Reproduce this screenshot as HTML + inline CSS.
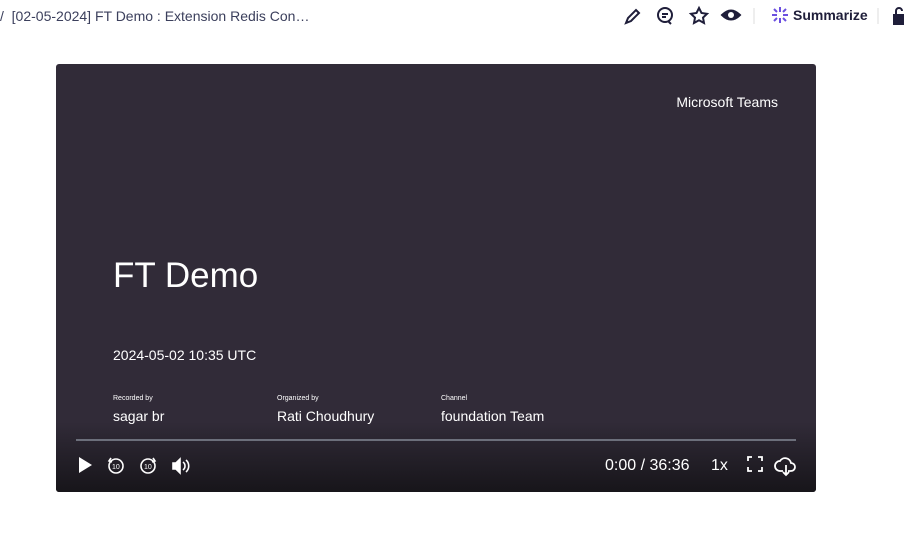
<!DOCTYPE html>
<html><head><meta charset="utf-8"><style>
body{margin:0;width:915px;height:539px;background:#fff;font-family:"Liberation Sans",sans-serif;position:relative;overflow:hidden}
.t{position:absolute;white-space:nowrap}
.v{position:absolute;left:56px;top:64px;width:760px;height:428px;background:#312b38;border-radius:3px;overflow:hidden;color:#fff}
.grad{position:absolute;left:0;right:0;bottom:0;height:70px;background:linear-gradient(#312b3800,#17151a)}
</style></head><body>
<div class="t" style="left:0;top:8px;font-size:14px;color:#3b3f5c">/ &nbsp;[02-05-2024] FT Demo : Extension Redis Con…</div>
<svg style="position:absolute;left:622px;top:5px" width="293" height="22" viewBox="0 0 293 22" fill="none" stroke="#1f1e3a" stroke-width="2">
<path d="M4 18l2-5 8-8 3 3-8 8z"/>
<circle cx="43" cy="10" r="7"/><path d="M40 9h6M40 12h4M46 16l3 3"/>
<path d="M77 3l2.5 5 5.5 .8-4 3.8 1 5.4-5-2.7-5 2.7 1-5.4-4-3.8 5.5-.8z"/>
<path d="M100 10q9-9 18 0q-9 9-18 0z" fill="#1f1e3a"/><circle cx="109" cy="10" r="3" fill="#fff" stroke="none"/>
<path d="M132 3v16" stroke="#ddd" stroke-width="1"/>
<path d="M158 2v5M158 13v5M150 10h5M161 10h5M152 4l3 3M161 13l3 3M164 4l-3 3M152 16l3-3" stroke="#6b4fe0"/>
<path d="M256 3v16" stroke="#ddd" stroke-width="1"/>
<rect x="272" y="10" width="9" height="9" fill="#1f1e3a"/><path d="M274 10V6a3 3 0 0 1 6 0"/>
</svg>
<div class="t" style="left:793px;top:7px;font-size:14px;font-weight:bold;color:#1f1e3a">Summarize</div>
<div class="v">
<div class="grad"></div>
<div class="t" style="right:38px;top:30px;font-size:14px">Microsoft Teams</div>
<div class="t" style="left:57px;top:192px;font-size:35px">FT Demo</div>
<div class="t" style="left:57px;top:283px;font-size:14px">2024-05-02 10:35 UTC</div>
<div class="t" style="left:57px;top:331px;font-size:7px">Recorded by</div>
<div class="t" style="left:57px;top:344px;font-size:14px">sagar br</div>
<div class="t" style="left:221px;top:331px;font-size:7px">Organized by</div>
<div class="t" style="left:221px;top:344px;font-size:14px">Rati Choudhury</div>
<div class="t" style="left:385px;top:331px;font-size:7px">Channel</div>
<div class="t" style="left:385px;top:344px;font-size:14px">foundation Team</div>
<div style="position:absolute;left:20px;top:375px;width:720px;height:2px;background:#6c6f7b"></div>
<svg style="position:absolute;left:20px;top:390px" width="120" height="22" fill="none" stroke="#fff" stroke-width="1.6">
<path d="M3 3l13 8-13 8z" fill="#fff" stroke="none"/>
<circle cx="40" cy="12" r="7"/><path d="M35 4l-2 3 3 1"/><text x="36" y="15" font-size="7" fill="#fff" stroke="none">10</text>
<circle cx="72" cy="12" r="7"/><path d="M77 4l2 3-3 1"/><text x="68" y="15" font-size="7" fill="#fff" stroke="none">10</text>
<path d="M97 9h3l4-4v14l-4-4h-3z" fill="#fff"/><path d="M107 8a5 5 0 0 1 0 8M110 6a8 8 0 0 1 0 12"/>
</svg>
<div class="t" style="left:549px;top:393px;font-size:16px">0:00 / 36:36</div>
<div class="t" style="left:655px;top:393px;font-size:16px">1x</div>
<svg style="position:absolute;left:690px;top:390px" width="55" height="24" fill="none" stroke="#fff" stroke-width="1.8">
<path d="M2 7V3h4M12 3h4v4M16 13v4h-4M6 17H2v-4"/>
<path d="M37 17h-3a5 5 0 0 1 0-10 6 6 0 0 1 11 2 4 4 0 0 1 0 8h-3M40 11v10M37 18l3 3 3-3"/>
</svg>
</div>
</body></html>
